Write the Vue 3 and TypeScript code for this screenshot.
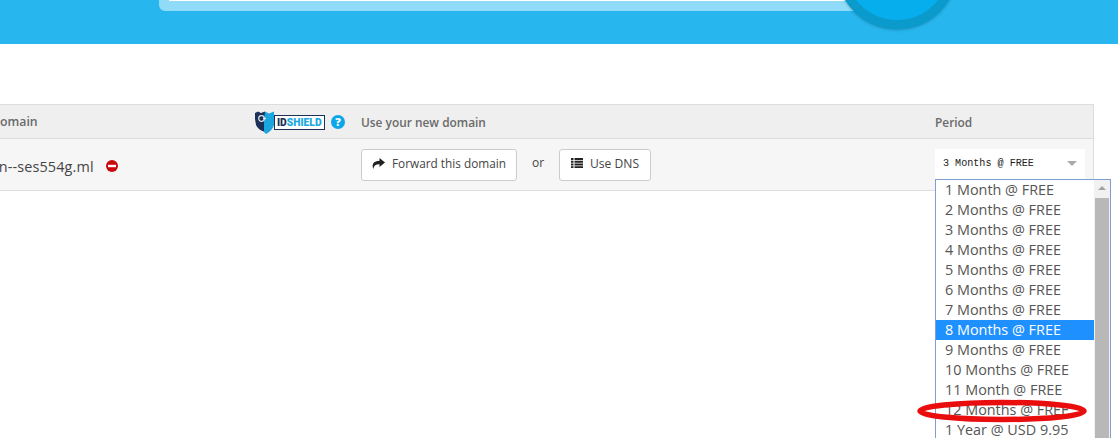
<script setup lang="ts">
const options: string[] = [
  '1 Month @ FREE', '2 Months @ FREE', '3 Months @ FREE', '4 Months @ FREE',
  '5 Months @ FREE', '6 Months @ FREE', '7 Months @ FREE', '8 Months @ FREE',
  '9 Months @ FREE', '10 Months @ FREE', '11 Month @ FREE', '12 Months @ FREE',
  '1 Year @ USD 9.95',
]
const selected = '8 Months @ FREE'
</script>

<template>
  <div class="page">
    <header class="hero">
      <div class="search"></div>
      <div class="go"></div>
    </header>

    <section class="table">
      <div class="row head">
        <div class="col-domain">
          <span class="head-domain">Domain</span>
          <div class="shield-wrap">
            <svg class="shield" width="20" height="23" viewBox="0 0 20 23">
              <path d="M0 2 L3 0.500 L6 2 L10 0.500 L10 21 Q3 19 1 14 L0 8 Z" fill="#1c3157" />
              <path d="M10 0.500 L14 2.500 L19 0.500 L19 14 Q17 20 11 23 L9 21 L9 10 Z" fill="#1ba6df" />
              <circle cx="6.500" cy="7.500" r="2.800" fill="none" stroke="#dfe8f0" stroke-width="1.200" />
              <rect x="8" y="6.800" width="3" height="1.400" fill="#dfe8f0" />
            </svg>
            <div class="shield-box"><b class="id">ID</b><b class="sh">SHIELD</b></div>
            <span class="help">?</span>
          </div>
        </div>
        <div class="col-use">Use your new domain</div>
        <div class="col-period">Period</div>
      </div>
      <div class="row body">
        <div class="col-domain">
          <span class="name">xn--ses554g.ml</span>
          <svg class="minus" width="12" height="12" viewBox="0 0 12 12">
            <circle cx="6" cy="6" r="6" fill="#c90a0a" />
            <rect x="2" y="4.800" width="8" height="2.400" fill="#fff" />
          </svg>
        </div>
        <div class="col-use actions">
          <button class="btn" type="button">
            <svg width="13" height="11" viewBox="0 0 13 11">
              <path d="M7.500 0 L13 4.500 L7.500 9 L7.500 6.300 C4 6.200 2 7.500 1.300 11 C-0.500 6.500 1.500 2.900 7.500 2.700 Z" fill="#222" />
            </svg>
            <span>Forward this domain</span>
          </button>
          <span class="or">or</span>
          <button class="btn dns" type="button">
            <svg width="12" height="10" viewBox="0 0 12 10">
              <path d="M0 0h2.500v2H0zM3.500 0H12v2H3.500zM0 2.800h2.500v2H0zM3.500 2.800H12v2H3.500zM0 5.600h2.500v2H0zM3.500 5.600H12v2H3.500zM0 8.300h2.500V10H0zM3.500 8.300H12V10H3.500z" fill="#222" />
            </svg>
            <span>Use DNS</span>
          </button>
        </div>
        <div class="col-period">
          <div class="select">
            <span>3 Months @ FREE</span>
            <i class="caret"></i>
          </div>
        </div>
      </div>
    </section>

    <div class="dropdown">
      <ul class="list">
        <li v-for="o in options" :key="o" :class="{ on: o === selected }">{{ o }}</li>
      </ul>
      <div class="scroll">
        <i class="up"></i>
        <div class="thumb"></div>
      </div>
    </div>

    <svg class="mark" width="176" height="28" viewBox="0 0 176 28">
      <ellipse cx="87" cy="14" rx="82" ry="8.500" fill="none" stroke="#ea0d0d" stroke-width="5.500" />
    </svg>
  </div>
</template>

<style>
html, body { margin: 0; background: #fff; }
</style>

<style scoped>
.page {
  position: relative;
  width: 1118px;
  height: 438px;
  overflow: hidden;
  background: #fff;
  font-family: "Open Sans", sans-serif;
  color: #555;
}
.hero {
  position: relative;
  height: 44px;
  background: #27b6ee;
  overflow: hidden;
}
.search {
  box-sizing: border-box;
  width: 740px;
  height: 41px;
  margin: -30px 0 0 159px;
  background: #fff;
  border: 10px solid #90dcf8;
  border-radius: 6px;
}
.go {
  position: absolute;
  left: 836px;
  top: -93px;
  box-sizing: border-box;
  width: 122px;
  height: 122px;
  border-radius: 50%;
  background: #06aeee;
  border: 9px solid #0a9acb;
  box-shadow: 0 1px 3px rgba(0, 60, 90, .35);
}
.table {
  margin: 60px 24px 0 -24px;
  border-top: 1px solid #ddd;
  border-right: 1px solid #ddd;
}
.row {
  display: flex;
  align-items: center;
  box-sizing: border-box;
  border-bottom: 1px solid #ddd;
}
.head {
  height: 34px;
  background: #efefef;
  font-size: 11.900px;
  font-weight: 600;
  color: #6a6a6a;
}
.head-domain { font-size: 12.300px; }
.body {
  height: 52px;
  background: #f6f6f6;
}
.col-domain {
  display: flex;
  align-items: center;
  box-sizing: border-box;
  width: 385px;
  padding-left: 15px;
  flex: none;
}
.col-use {
  flex: 1;
  min-width: 0;
}
.col-period {
  width: 158px;
  flex: none;
}
.shield-wrap {
  display: flex;
  align-items: center;
  margin: 1px 16px 0 auto;
}
.shield { flex: none; z-index: 1; margin-right: -1px; }
.shield-box {
  box-sizing: border-box;
  width: 51px;
  height: 15px;
  line-height: 13px;
  border: 1px solid #1c3157;
  background: #fff;
  font-family: Roboto, sans-serif;
  font-size: 10.300px;
  padding-left: 2px;
  white-space: nowrap;
}
.id { color: #1c3157; }
.sh { color: #1ba6df; }
.help {
  width: 14px;
  height: 14px;
  margin-left: 6px;
  border-radius: 50%;
  background: #0ea6ea;
  color: #fff;
  font-size: 11px;
  font-weight: 800;
  line-height: 14px;
  text-align: center;
}
.name {
  font-size: 14.400px;
  letter-spacing: .15px;
  color: #444;
  margin-top: 3px;
}
.minus { margin: 3px 0 0 12px; }
.actions {
  display: flex;
  align-items: center;
}
.btn {
  display: flex;
  align-items: center;
  gap: 7px;
  box-sizing: border-box;
  height: 32px;
  width: 156px;
  padding: 0 0 3px 10px;
  background: #fff;
  border: 1px solid #ccc;
  border-radius: 3px;
  font-family: inherit;
  font-size: 11.800px;
  color: #444;
}
.btn.dns { width: 92px; padding-left: 11px; font-size: 12.100px; }
.or {
  width: 42px;
  margin-top: -4px;
  text-align: center;
  font-size: 12px;
  color: #444;
}
.select {
  display: flex;
  align-items: center;
  justify-content: space-between;
  box-sizing: border-box;
  width: 150px;
  height: 32px;
  padding: 0 8px 2px 8px;
  background: #fff;
  font-family: "Liberation Mono", monospace;
  font-size: 10.100px;
  color: #222;
}
.caret {
  width: 0;
  height: 0;
  border-left: 5px solid transparent;
  border-right: 5px solid transparent;
  border-top: 5px solid #aaa;
}
.dropdown {
  position: absolute;
  left: 935px;
  top: 179px;
  box-sizing: border-box;
  display: flex;
  width: 176px;
  height: 280px;
  background: #fff;
  border: 1px solid #7f9fd0;
}
.list {
  flex: 1;
  margin: 0;
  padding: 0;
  list-style: none;
  font-size: 14.400px;
  line-height: 20px;
  color: #555;
}
.list li { padding-left: 9px; white-space: nowrap; }
.list li.on { background: #1e90ff; color: #fff; }
.scroll {
  width: 16px;
  flex: none;
  display: flex;
  flex-direction: column;
  align-items: center;
  background: #f1f1f1;
}
.up {
  width: 0;
  height: 0;
  margin: 6px 0 8px;
  border-left: 4px solid transparent;
  border-right: 4px solid transparent;
  border-bottom: 4px solid #a3a3a3;
}
.thumb {
  width: 14px;
  flex: 1;
  background: #b8b8b8;
}
.mark {
  position: absolute;
  left: 915px;
  top: 397px;
}
</style>
